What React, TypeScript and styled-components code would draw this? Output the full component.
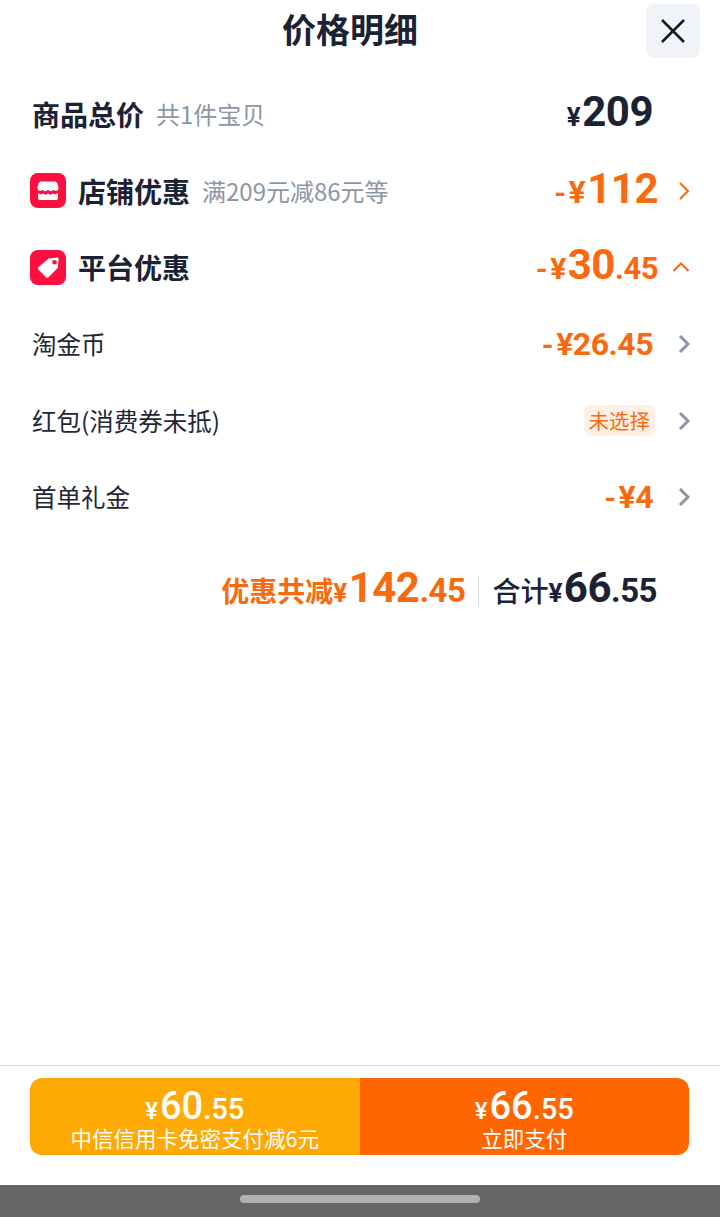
import styled, { createGlobalStyle } from "styled-components";

const CJK = `"Noto Sans CJK SC", "Noto Sans", sans-serif`;
const NUM = `"Roboto", "Liberation Sans", "Noto Sans CJK SC", sans-serif`;

const GlobalStyle = createGlobalStyle`
    html, body {
        margin: 0;
        padding: 0;
        background: #fff;
    }
    * {
        box-sizing: border-box;
    }
`;

const Page = styled.div`
    width: 720px;
    height: 1217px;
    display: flex;
    flex-direction: column;
    background: #fff;
    color: #1a2233;
    font-family: ${CJK};
`;

const Header = styled.header`
    height: 76px;
    padding: 4px 20px 0 54px;
    display: flex;
    align-items: flex-start;
    justify-content: space-between;
`;

const Title = styled.h1`
    margin: 0;
    flex: 1;
    height: 54px;
    line-height: 50px;
    text-align: center;
    font-size: 34px;
    font-weight: 700;
`;

const CloseButton = styled.button`
    width: 54px;
    height: 54px;
    padding: 0;
    border: 0;
    border-radius: 8px;
    background: #f0f4f8;
    display: flex;
    align-items: center;
    justify-content: center;
`;

const List = styled.div`
    display: flex;
    flex-direction: column;
`;

const Row = styled.div`
    height: 76.6px;
    padding: 0 30px 0 32px;
    display: flex;
    align-items: center;
    justify-content: space-between;
`;

const Left = styled.div<{ $iconed?: boolean }>`
    display: flex;
    align-items: center;
    margin-left: ${(props) => (props.$iconed ? "-2px" : "0")};
`;

const Right = styled.div`
    display: flex;
    align-items: center;
`;

const Badge = styled.span`
    width: 36px;
    height: 35px;
    margin-right: 12px;
    display: flex;
`;

const Heading = styled.span`
    font-size: 28px;
    font-weight: 700;
    line-height: 40px;
`;

const Sub = styled.span`
    margin-left: 12px;
    font-size: 24px;
    line-height: 40px;
    color: #8c96a5;
`;

const Label = styled.span`
    font-size: 24.5px;
    line-height: 40px;
    color: #1f2735;
`;

const Money = styled.span<{ $orange?: boolean; $size: number }>`
    display: inline-flex;
    align-items: baseline;
    font-family: ${NUM};
    font-weight: 700;
    font-size: ${(props) => props.$size}px;
    line-height: 44px;
    letter-spacing: -0.5px;
    color: ${(props) => (props.$orange ? "#f96a0e" : "#1a2233")};
`;

const Yen = styled.span<{ $size: number }>`
    font-size: ${(props) => props.$size}px;
    margin-right: 2px;
`;

const Dec = styled.span<{ $size: number }>`
    font-size: ${(props) => props.$size}px;
`;

const Dash = styled.span`
    font-size: 30px;
    margin-right: 3px;
`;

const Slot = styled.span<{ $wide?: boolean }>`
    width: ${(props) => (props.$wide ? "32px" : "37px")};
    display: flex;
    justify-content: flex-end;
`;

const Tag = styled.span`
    height: 31px;
    padding: 0 5px;
    margin-right: -2px;
    border-radius: 6px;
    background: #fff0e5;
    color: #f96a0e;
    font-size: 20.5px;
    line-height: 30px;
`;

const Summary = styled.div`
    margin-top: 30px;
    padding-right: 63px;
    height: 50px;
    display: flex;
    align-items: center;
    justify-content: flex-end;
`;

const SummaryLabel = styled.span<{ $orange?: boolean }>`
    font-family: ${CJK};
    font-size: 28px;
    font-weight: ${(props) => (props.$orange ? 700 : 500)};
    letter-spacing: 0;
    line-height: 44px;
    color: ${(props) => (props.$orange ? "#f96a0e" : "#1a2233")};
`;

const Divider = styled.span`
    width: 1px;
    height: 30px;
    margin: 0 13px;
    background: #d8dce2;
`;

const Spacer = styled.div`
    flex: 1;
`;

const Footer = styled.footer`
    height: 120px;
    padding: 12px 31px 0 30px;
    border-top: 1px solid #dcdcdc;
`;

const PayBar = styled.div`
    height: 77px;
    display: flex;
    border-radius: 12px;
    overflow: hidden;
`;

const PayOption = styled.div<{ $alt?: boolean }>`
    flex: 1;
    display: flex;
    flex-direction: column;
    align-items: center;
    justify-content: center;
    color: #fff;
    background: ${(props) => (props.$alt ? "#ffa905" : "#ff6600")};
`;

const PayPrice = styled.span`
    display: inline-flex;
    align-items: baseline;
    height: 44px;
    font-family: ${NUM};
    font-weight: 500;
    font-size: 38px;
    line-height: 48px;
`;

const PayText = styled.span`
    font-size: 21.5px;
    line-height: 28px;
    margin-top: -2px;
`;

const NavBar = styled.div`
    height: 32px;
    background: #666;
    display: flex;
    justify-content: center;
    padding-top: 10px;
`;

const NavHandle = styled.span`
    width: 240px;
    height: 8px;
    border-radius: 4px;
    background: #b0b0b0;
`;

const Chevron = ({ color = "#8a94a3", up = false, thin = false }: { color?: string; up?: boolean; thin?: boolean }) =>
    up ? (
        <svg width="18" height="12" viewBox="0 0 18 12" fill="none">
            <path d="M1.5 10 L9 2.5 L16.5 10" stroke={color} strokeWidth="2" />
        </svg>
    ) : (
        <svg width="12" height="20" viewBox="0 0 12 20" fill="none">
            <path d="M2 2 L10 10 L2 18" stroke={color} strokeWidth={thin ? 2 : 3} />
        </svg>
    );

const StoreIcon = () => (
    <svg width="36" height="35" viewBox="0 0 36 35">
        <rect width="36" height="35" rx="8" fill="#ff0f3f" />
        <path
            d="M11 8.5 H25 C27 8.5 28 11 28.5 15 C28.5 18 25.5 18.5 23.5 17 C21.5 18.5 20 18.5 18 17 C16 18.5 14.5 18.5 12.5 17 C10.5 18.5 7.5 18 7.5 15 C8 11 9 8.5 11 8.5 Z"
            fill="#fff"
        />
        <path
            d="M8 20 C10 21.5 12 21.5 13 20.5 C15 22 16 22 18 20.5 C20 22 21 22 23 20.5 C24 21.5 26 21.5 28 20 V25 C28 26 27 27 26 27 H10 C9 27 8 26 8 25 Z"
            fill="#fff"
        />
    </svg>
);

const TagIcon = () => (
    <svg width="36" height="35" viewBox="0 0 36 35">
        <rect width="36" height="35" rx="8" fill="#ff0f3f" />
        <path
            fillRule="evenodd"
            d="M19 8.5 L27 7.5 C28 7.4 28.7 8 28.6 9 L28 17 C28 17.6 27.7 18 27.4 18.3 L18.5 27.2 C17.8 28 16.8 28 16 27.2 L8.5 19.7 C7.8 19 7.8 18 8.5 17.3 L18 8.9 C18.3 8.7 18.6 8.5 19 8.5 Z M24.5 10 A2.3 2.3 0 1 0 24.5 14.6 A2.3 2.3 0 1 0 24.5 10 Z"
            fill="#fff"
        />
    </svg>
);

const App = () => {
    return (
        <Page>
            <GlobalStyle />
            <Header>
                <Title>价格明细</Title>
                <CloseButton aria-label="关闭">
                    <svg width="26" height="26" viewBox="0 0 26 26" fill="none">
                        <path d="M2 2 L24 24 M24 2 L2 24" stroke="#121a2a" strokeWidth="2.6" />
                    </svg>
                </CloseButton>
            </Header>
            <List>
                <Row>
                    <Left>
                        <Heading>商品总价</Heading>
                        <Sub>共1件宝贝</Sub>
                    </Left>
                    <Right>
                        <Money $size={42}>
                            <Yen $size={26}>¥</Yen>209
                        </Money>
                        <Slot />
                    </Right>
                </Row>
                <Row>
                    <Left $iconed>
                        <Badge>
                            <StoreIcon />
                        </Badge>
                        <Heading>店铺优惠</Heading>
                        <Sub>满209元减86元等</Sub>
                    </Left>
                    <Right>
                        <Money $orange $size={42}>
                            <Dash>-</Dash>
                            <Yen $size={32}>¥</Yen>112
                        </Money>
                        <Slot $wide>
                            <Chevron color="#f96a0e" thin />
                        </Slot>
                    </Right>
                </Row>
                <Row>
                    <Left $iconed>
                        <Badge>
                            <TagIcon />
                        </Badge>
                        <Heading>平台优惠</Heading>
                    </Left>
                    <Right>
                        <Money $orange $size={42}>
                            <Dash>-</Dash>
                            <Yen $size={30}>¥</Yen>30
                            <Dec $size={31}>.45</Dec>
                        </Money>
                        <Slot $wide>
                            <Chevron color="#f96a0e" up />
                        </Slot>
                    </Right>
                </Row>
                <Row>
                    <Label>淘金币</Label>
                    <Right>
                        <Money $orange $size={32}>
                            <Dash>-</Dash>¥26.45
                        </Money>
                        <Slot>
                            <Chevron />
                        </Slot>
                    </Right>
                </Row>
                <Row>
                    <Label>红包(消费券未抵)</Label>
                    <Right>
                        <Tag>未选择</Tag>
                        <Slot>
                            <Chevron />
                        </Slot>
                    </Right>
                </Row>
                <Row>
                    <Label>首单礼金</Label>
                    <Right>
                        <Money $orange $size={32}>
                            <Dash>-</Dash>¥4
                        </Money>
                        <Slot>
                            <Chevron />
                        </Slot>
                    </Right>
                </Row>
            </List>
            <Summary>
                <Money $orange $size={42}>
                    <SummaryLabel $orange>优惠共减</SummaryLabel>
                    <Yen $size={26}>¥</Yen>142
                    <Dec $size={33}>.45</Dec>
                </Money>
                <Divider />
                <Money $size={42}>
                    <SummaryLabel>合计</SummaryLabel>
                    <Yen $size={26}>¥</Yen>66
                    <Dec $size={33}>.55</Dec>
                </Money>
            </Summary>
            <Spacer />
            <Footer>
                <PayBar>
                    <PayOption $alt>
                        <PayPrice>
                            <Yen $size={24}>¥</Yen>60
                            <Dec $size={29}>.55</Dec>
                        </PayPrice>
                        <PayText>中信信用卡免密支付减6元</PayText>
                    </PayOption>
                    <PayOption>
                        <PayPrice>
                            <Yen $size={24}>¥</Yen>66
                            <Dec $size={29}>.55</Dec>
                        </PayPrice>
                        <PayText>立即支付</PayText>
                    </PayOption>
                </PayBar>
            </Footer>
            <NavBar>
                <NavHandle />
            </NavBar>
        </Page>
    );
};

export default App;
